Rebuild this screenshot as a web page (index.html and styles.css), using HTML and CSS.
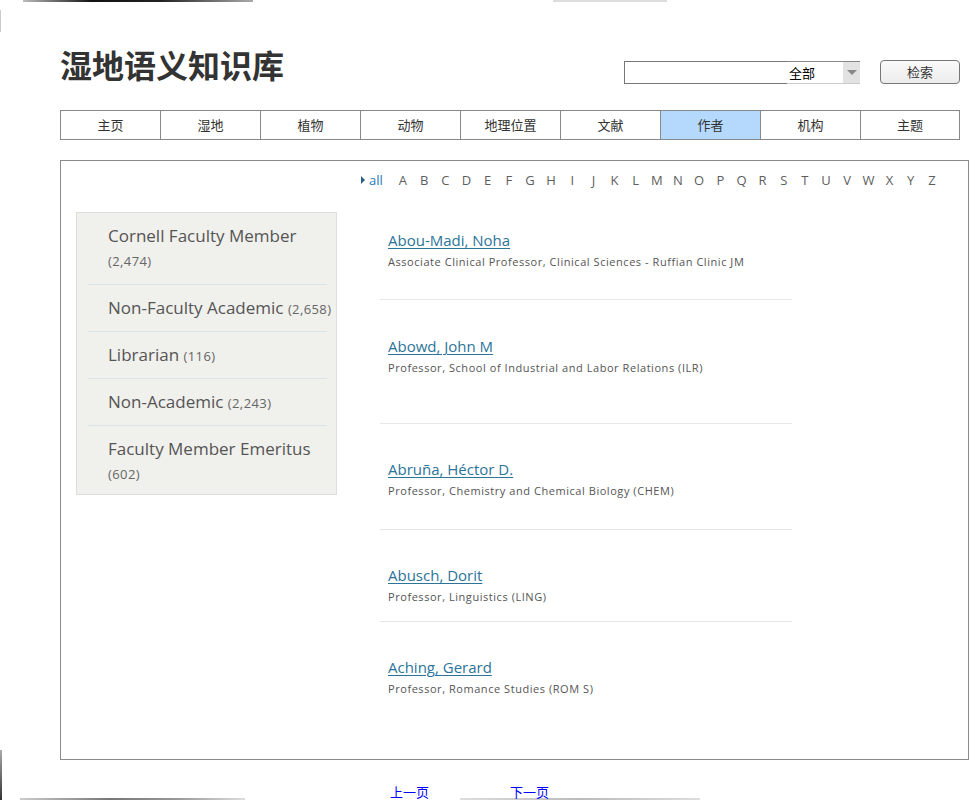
FILE: index.html
```html
<!DOCTYPE html>
<html lang="zh">
<head>
<meta charset="utf-8">
<title>湿地语义知识库</title>
<link rel="stylesheet" href="styles.css">
</head>
<body>
<header class="header">
  <h1 class="title">湿地语义知识库</h1>
  <div class="search">
    <input class="search-input" type="text">
    <div class="scope">
      <span class="scope-value">全部</span>
      <span class="scope-arrow"><span class="tri-down"></span></span>
    </div>
    <button class="search-btn" type="button">检索</button>
  </div>
</header>

<nav class="nav">
  <a class="nav-item">主页</a>
  <a class="nav-item">湿地</a>
  <a class="nav-item">植物</a>
  <a class="nav-item">动物</a>
  <a class="nav-item">地理位置</a>
  <a class="nav-item">文献</a>
  <a class="nav-item active">作者</a>
  <a class="nav-item">机构</a>
  <a class="nav-item last">主题</a>
</nav>

<main class="panel">
  <div class="alpha">
    <span class="tri-right"></span><a class="alpha-all">all</a>
    <a class="letter">A</a><a class="letter">B</a><a class="letter">C</a><a class="letter">D</a><a class="letter">E</a><a class="letter">F</a><a class="letter">G</a><a class="letter">H</a><a class="letter">I</a><a class="letter">J</a><a class="letter">K</a><a class="letter">L</a><a class="letter">M</a><a class="letter">N</a><a class="letter">O</a><a class="letter">P</a><a class="letter">Q</a><a class="letter">R</a><a class="letter">S</a><a class="letter">T</a><a class="letter">U</a><a class="letter">V</a><a class="letter">W</a><a class="letter">X</a><a class="letter">Y</a><a class="letter">Z</a>
  </div>

  <div class="body">
    <ul class="facets">
      <li class="facet">Cornell Faculty Member <span class="count block">(2,474)</span></li>
      <li class="facet">Non-Faculty Academic <span class="count">(2,658)</span></li>
      <li class="facet">Librarian <span class="count">(116)</span></li>
      <li class="facet">Non-Academic <span class="count">(2,243)</span></li>
      <li class="facet last">Faculty Member Emeritus <span class="count block">(602)</span></li>
    </ul>

    <ul class="results">
      <li class="result r1">
        <a class="name" href="#">Abou-Madi, Noha</a>
        <p class="desc">Associate Clinical Professor, Clinical Sciences - Ruffian Clinic JM</p>
      </li>
      <li class="result r2">
        <a class="name" href="#">Abowd, John M</a>
        <p class="desc">Professor, School of Industrial and Labor Relations (ILR)</p>
      </li>
      <li class="result r3">
        <a class="name" href="#">Abruña, Héctor D.</a>
        <p class="desc">Professor, Chemistry and Chemical Biology (CHEM)</p>
      </li>
      <li class="result r4">
        <a class="name" href="#">Abusch, Dorit</a>
        <p class="desc">Professor, Linguistics (LING)</p>
      </li>
      <li class="result r5">
        <a class="name" href="#">Aching, Gerard</a>
        <p class="desc">Professor, Romance Studies (ROM S)</p>
      </li>
    </ul>
  </div>
</main>

<div class="pager">
  <a class="page-link">上一页</a>
  <a class="page-link next">下一页</a>
</div>
</body>
</html>
```

FILE: styles.css
```css
html, body {
  margin: 0;
  padding: 0;
  height: 800px;
  overflow: hidden;
}

body {
  font-family: "Open Sans", "Noto Sans CJK SC", sans-serif;
  color: #333;
  background-color: #fff;
  background-image:
    linear-gradient(90deg, #bbb, #111 30%, #222 60%, #aaa),
    linear-gradient(90deg, #ddd, #ddd),
    linear-gradient(90deg, #ccc, #777 40%, #999 70%, #ddd),
    linear-gradient(90deg, #ddd, #bbb 50%, #ddd),
    linear-gradient(180deg, #ccc, #ccc),
    linear-gradient(180deg, #aaa, #333);
  background-size: 230px 2px, 114px 2px, 225px 2px, 240px 2px, 1px 22px, 2px 50px;
  background-position: 23px 0, 553px 0, 20px 798px, 460px 798px, 0 10px, 0 750px;
  background-repeat: no-repeat;
}

/* header */
.header {
  display: flex;
  align-items: flex-start;
  height: 110px;
  padding-left: 60px;
  box-sizing: border-box;
}

.title {
  margin: 48px 0 0;
  font-family: "Noto Sans CJK SC", sans-serif;
  font-size: 32px;
  line-height: 32px;
  font-weight: 700;
  color: #333;
}

.search {
  display: flex;
  align-items: flex-start;
  margin-left: 340px;
  margin-top: 60px;
}

.search-input {
  margin: 1px 0 0;
  width: 163px;
  height: 23px;
  box-sizing: border-box;
  border: 1px solid #777;
  border-right: none;
  padding: 0 4px;
  font: inherit;
  outline: none;
}

.scope {
  display: flex;
  margin-top: 1px;
  width: 73px;
  height: 23px;
  box-sizing: border-box;
  border-top: 1px solid #888;
  border-bottom: 1px solid #ccc;
}

.scope-value {
  flex: 1;
  padding-left: 2px;
  font-family: "Noto Sans CJK SC", sans-serif;
  font-size: 13px;
  line-height: 21px;
  color: #000;
}

.scope-arrow {
  width: 17px;
  background: #e2e2e2;
  display: flex;
  align-items: center;
  justify-content: center;
}

.tri-down {
  width: 0;
  height: 0;
  border-left: 5px solid transparent;
  border-right: 5px solid transparent;
  border-top: 5px solid #888;
}

.search-btn {
  margin-left: 20px;
  width: 80px;
  height: 24px;
  box-sizing: border-box;
  border: 1px solid #777;
  border-radius: 4px;
  background: linear-gradient(#fafafa, #ececec);
  font-family: "Noto Sans CJK SC", sans-serif;
  font-size: 13px;
  color: #333;
  padding: 0;
  line-height: 20px;
}

/* nav */
.nav {
  display: flex;
  margin-left: 60px;
  width: 900px;
  height: 30px;
  box-sizing: border-box;
  border: 1px solid #888;
}

.nav-item {
  flex: 0 0 100px;
  box-sizing: border-box;
  border-right: 1px solid #888;
  text-align: center;
  font-family: "Noto Sans CJK SC", sans-serif;
  font-size: 13px;
  line-height: 28px;
  color: #333;
}

.nav-item.last {
  flex: 1;
  border-right: none;
}

.nav-item.active {
  background: #b4d9fd;
}

/* panel */
.panel {
  margin: 20px 0 0 60px;
  width: 909px;
  height: 600px;
  box-sizing: border-box;
  border: 1px solid #8a8a8a;
}

.alpha {
  display: flex;
  align-items: center;
  margin-top: 10px;
  padding-left: 300px;
  height: 18px;
  font-size: 13px;
  line-height: 18px;
}

.tri-right {
  width: 0;
  height: 0;
  border-top: 4px solid transparent;
  border-bottom: 4px solid transparent;
  border-left: 4px solid #2b5f80;
  margin-right: 4px;
}

.alpha-all {
  width: 23.4px;
  color: #1f7ab8;
}

.letter {
  width: 21.16px;
  text-align: center;
  color: #5e5e5e;
}

.body {
  display: flex;
  align-items: flex-start;
  margin-top: 23px;
}

.facets {
  list-style: none;
  margin: 0 0 0 15px;
  padding: 0 9px 0 11px;
  width: 261px;
  height: 283px;
  box-sizing: border-box;
  background: #f0f0ec;
  border: 1px solid #dededb;
}

.facet {
  padding: 10px 0 10px 20px;
  font-size: 17px;
  line-height: 26px;
  color: #555;
  white-space: nowrap;
  border-bottom: 1px solid #dce3e6;
}

.facet.last {
  border-bottom: none;
}

.count {
  font-size: 13px;
  line-height: 1;
  letter-spacing: 0.4px;
  color: #666;
}

.count.block {
  display: block;
  line-height: 25px;
}

.results {
  list-style: none;
  margin: 0 0 0 43px;
  padding: 0;
  width: 412px;
}

.result {
  box-sizing: border-box;
  padding: 35px 8px 0;
  border-top: 1px solid #e7e7e7;
}

.result.r1 {
  padding-top: 18px;
  height: 87px;
  border-top: none;
}

.result.r2 {
  padding-top: 36px;
  height: 124px;
}

.result.r3 { height: 106px; }
.result.r4 { height: 92px; }
.result.r5 { height: 90px; }

.name {
  display: block;
  font-size: 15px;
  line-height: 20px;
  color: #2c7499;
  text-decoration: underline;
  text-underline-offset: 2px;
}

.desc {
  margin: 4px 0 0;
  font-size: 11px;
  line-height: 16px;
  letter-spacing: 0.55px;
  color: #555;
}

/* pager */
.pager {
  display: flex;
  margin-top: 24px;
  padding-left: 390px;
  height: 16px;
}

.page-link {
  font-family: "Noto Sans CJK SC", sans-serif;
  font-size: 13px;
  line-height: 16px;
  color: #0000ff;
}

.page-link.next {
  margin-left: 81px;
}
```
